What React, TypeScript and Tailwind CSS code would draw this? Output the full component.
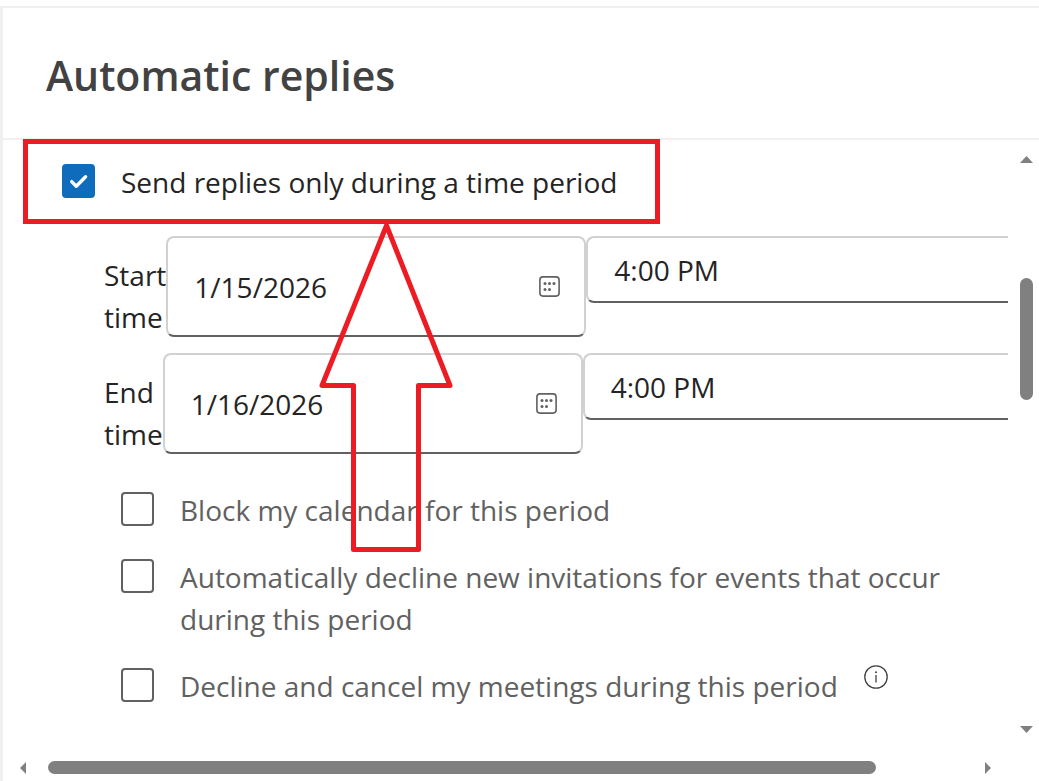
import { useState } from "react";

function Checkbox({
  id,
  checked,
  onChange,
}: {
  id: string;
  checked: boolean;
  onChange: () => void;
}) {
  return (
    <span className="relative mt-[3px] h-[34px] w-[33px] shrink-0">
      <input
        id={id}
        type="checkbox"
        checked={checked}
        onChange={onChange}
        className="block h-full w-full appearance-none rounded-sm border-2 border-[#616161] bg-white checked:border-[#0f6cbd] checked:bg-[#0f6cbd]"
      />
      {checked && (
        <svg
          viewBox="0 0 33 34"
          className="pointer-events-none absolute inset-0 h-full w-full"
          fill="none"
          stroke="white"
          strokeWidth="3.4"
          strokeLinecap="round"
          strokeLinejoin="round"
        >
          <path d="M9.7 17.6l4.6 4.6L23.6 12.8" />
        </svg>
      )}
    </span>
  );
}

function CalendarIcon() {
  return (
    <svg viewBox="0 0 21 21" className="h-[21px] w-[21px]" fill="none">
      <rect
        x="0.9"
        y="0.9"
        width="19.2"
        height="19.2"
        rx="3"
        stroke="#616161"
        strokeWidth="1.6"
      />
      <g fill="#616161">
        <circle cx="6" cy="7.5" r="1.5" />
        <circle cx="10.5" cy="7.5" r="1.5" />
        <circle cx="15" cy="7.5" r="1.5" />
        <circle cx="6" cy="13.5" r="1.5" />
        <circle cx="10.5" cy="13.5" r="1.5" />
      </g>
    </svg>
  );
}

function TimeRow({
  id,
  label,
  date,
  time,
}: {
  id: string;
  label: string;
  date: string;
  time: string;
}) {
  return (
    <div className="flex items-start">
      <label htmlFor={id} className="w-min shrink-0 pt-[18px]">
        {label}
      </label>
      <div className="flex h-[101px] w-[420px] shrink-0 items-center rounded-lg border-2 border-[#d1d1d1] border-b-[#616161] pr-6 pl-[26px]">
        <input
          id={id}
          type="text"
          defaultValue={date}
          className="h-[42px] min-w-0 flex-1 outline-none"
        />
        <button type="button" aria-label="Open calendar">
          <CalendarIcon />
        </button>
      </div>
      <div className="flex h-[67px] min-w-0 flex-1 items-center rounded-l-lg border-2 border-r-0 border-[#d1d1d1] border-b-[#616161] pl-[26px]">
        <input
          type="text"
          aria-label={label + " of day"}
          defaultValue={time}
          className="h-[42px] min-w-0 flex-1 outline-none"
        />
      </div>
    </div>
  );
}

const options = [
  { id: "block", label: "Block my calendar for this period" },
  {
    id: "decline",
    label:
      "Automatically decline new invitations for events that occur during this period",
  },
  {
    id: "cancel",
    label: "Decline and cancel my meetings during this period",
    info: true,
  },
];

export default function App() {
  const [checked, setChecked] = useState<Record<string, boolean>>({
    send: true,
  });

  const toggle = (id: string) =>
    setChecked((prev) => ({ ...prev, [id]: !prev[id] }));

  return (
    <div className="flex min-h-screen flex-col bg-white pt-1.5 font-['Open_Sans','Segoe_UI',sans-serif] text-[28px] leading-[42px] text-[#242424]">
      <div className="flex flex-1 flex-col border-t-2 border-l-[3px] border-[#f0f0f0]">
        <header className="border-b-2 border-[#f0f0f0] px-[43px] pt-[42px] pb-[38px]">
          <h1 className="text-[41px] leading-[50px] font-semibold text-[#424242]">
            Automatic replies
          </h1>
        </header>

        <div className="relative flex flex-1">
          <main className="min-w-0 flex-1 pt-[21px]">
            <div className="flex gap-[26px] pl-[59px]">
              <Checkbox
                id="send"
                checked={!!checked.send}
                onChange={() => toggle("send")}
              />
              <label htmlFor="send">Send replies only during a time period</label>
            </div>

            <div className="mt-[33px] flex flex-col gap-[15px] pl-[101px]">
              <TimeRow id="start" label="Start time" date="1/15/2026" time="4:00 PM" />
              <TimeRow id="end" label="End time" date="1/16/2026" time="4:00 PM" />
            </div>

            <div className="mt-[34px] flex flex-col gap-[25px] pr-10 pl-[118px] text-[#616161]">
              {options.map((o) => (
                <div key={o.id} className="flex gap-[26px]">
                  <Checkbox
                    id={o.id}
                    checked={!!checked[o.id]}
                    onChange={() => toggle(o.id)}
                  />
                  <label htmlFor={o.id}>{o.label}</label>
                  {o.info && (
                    <button
                      type="button"
                      aria-label="More information"
                      className="self-start"
                    >
                      <svg viewBox="0 0 24 24" className="h-6 w-6" fill="none">
                        <circle cx="12" cy="12" r="11.2" stroke="#424242" strokeWidth="1.3" />
                        <path d="M12 10v7.5" stroke="#424242" strokeWidth="1.3" />
                        <circle cx="12" cy="7.2" r="1" fill="#424242" />
                      </svg>
                    </button>
                  )}
                </div>
              ))}
            </div>
          </main>

          {/* vertical scrollbar */}
          <div className="mr-1.5 ml-3 flex w-[13px] shrink-0 flex-col pt-4">
            <svg viewBox="0 0 13 7" className="h-[7px] w-[13px]" fill="#808080">
              <path d="M0 7L6.5 0 13 7z" />
            </svg>
            <div className="grow-[115]" />
            <div className="grow-[122] rounded-full bg-[#808080]" />
            <div className="grow-[326]" />
            <svg viewBox="0 0 13 7" className="h-[7px] w-[13px]" fill="#808080">
              <path d="M0 0h13L6.5 7z" />
            </svg>
          </div>

          {/* red highlight box and arrow */}
          <svg
            viewBox="0 0 640 416"
            className="pointer-events-none absolute -top-px left-5 h-[416px] w-[640px]"
            fill="none"
            stroke="#ed1c24"
            strokeWidth="5"
          >
            <path d="M2.5 2.5h632v80h-632z" />
            <path
              d="M363.5 86.5L299 246.5h31.5v164h65v-164h31.5z"
              strokeLinejoin="round"
            />
          </svg>
        </div>

        {/* horizontal scrollbar */}
        <div className="flex items-center pt-7 pr-12 pb-[7px] pl-[17px]">
          <svg viewBox="0 0 6 12" className="h-3 w-1.5" fill="#808080">
            <path d="M6 0v12L0 6z" />
          </svg>
          <div className="ml-[22px] h-[13px] grow-[828] rounded-full bg-[#808080]" />
          <div className="grow-[109]" />
          <svg viewBox="0 0 6 12" className="h-3 w-1.5" fill="#808080">
            <path d="M0 0v12l6-6z" />
          </svg>
        </div>
      </div>
    </div>
  );
}
